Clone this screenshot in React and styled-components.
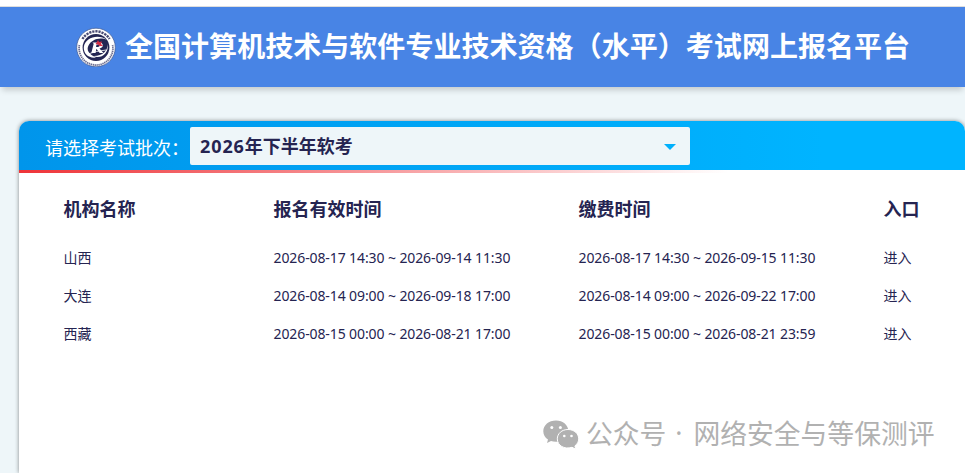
import React from "react";
import styled, { createGlobalStyle } from "styled-components";

const GlobalStyle = createGlobalStyle`
    * {
        box-sizing: border-box;
    }
    body {
        margin: 0;
        overflow: hidden;
        background-color: #eef6f9;
        font-family: "Noto Sans", "Noto Sans CJK SC", sans-serif;
        color: #252451;
    }
`

const Page = styled.div`
    display: flex;
    flex-direction: column;
    height: 473px;
    overflow: hidden;
`

const TopLine = styled.div`
    flex: none;
    height: 7px;
    background-color: white;
    border-bottom: 1px solid #dedede;
`

const Header = styled.header`
    display: flex;
    flex: none;
    align-items: center;
    height: 80px;
    padding-left: 76px;
    background-color: #4884e5;
    box-shadow: 0 5px 6px -2px rgba(0, 0, 0, 0.18);
`

const Title = styled.h1`
    margin: 0 0 0 9px;
    padding-bottom: 4px;
    font-size: 28px;
    line-height: 40px;
    font-weight: bold;
    font-family: "Noto Sans CJK SC", sans-serif;
    letter-spacing: 0.04px;
    white-space: nowrap;
    color: white;
`

const Card = styled.main`
    flex: 1;
    margin: 34px 0 0 19px;
    border-radius: 10px 10px 0 0;
    background-color: white;
    box-shadow: 0 0 4px rgba(0, 0, 0, 0.45);
`

const BatchBar = styled.div`
    display: flex;
    align-items: center;
    height: 49px;
    padding-left: 26px;
    border-radius: 10px 10px 0 0;
    background: linear-gradient(90deg, #0095eb, #00b4ff 85%);
`

const RedLine = styled.div`
    height: 3px;
    background: linear-gradient(90deg, #ee3338, rgba(238, 51, 56, 0) 75%);
`

const BatchLabel = styled.label`
    width: 145px;
    padding-top: 2px;
    font-size: 18px;
    line-height: 26px;
    font-weight: 400;
    font-family: "Noto Sans CJK SC", sans-serif;
    white-space: nowrap;
    color: white;
`

const Select = styled.div`
    display: flex;
    align-items: center;
    justify-content: space-between;
    width: 500px;
    height: 38px;
    padding: 0 14px 0 10px;
    border-radius: 2px;
    background-color: #eef6f9;
    font-size: 18px;
    line-height: 26px;
    font-weight: bold;
`

const Batch = styled.span`
    padding-top: 1px;
`

const Year = styled.span`
    letter-spacing: 0.9px;
`

const Arrow = styled.span`
    margin-top: 2px;
    border: 6px solid transparent;
    border-top-color: #00b0fc;
    border-bottom: 0;
`

const Row = styled.div`
    display: grid;
    grid-template-columns: 210px 305px 305px 1fr;
    align-items: center;
    height: 38px;
    padding-left: 44.5px;
    font-size: 14px;
    line-height: 20px;
    white-space: nowrap;
`

const HeadRow = styled(Row)`
    height: 66px;
    padding-top: 6px;
    font-size: 18px;
    line-height: 26px;
    font-weight: bold;
`

const Time = styled.span`
    letter-spacing: -0.1px;
`

const Watermark = styled.div`
    position: absolute;
    left: 543px;
    top: 413px;
    display: flex;
    align-items: center;
    height: 40px;
    color: #b1b1b1;
    font-size: 26.8px;
    line-height: 40px;
    font-weight: 400;
    font-family: "Noto Sans CJK SC", sans-serif;
    white-space: nowrap;
`

const WatermarkIcon = styled.svg`
    flex: none;
    margin-top: 4px;
`

const Account = styled.span`
    margin-left: 6px;
`

const Dot = styled.span`
    width: 27px;
    padding-right: 2px;
    text-align: center;
    font-family: "Noto Sans", sans-serif;
`

const rows = [
    { name: "山西", signup: "2026-08-17 14:30 ~ 2026-09-14 11:30", pay: "2026-08-17 14:30 ~ 2026-09-15 11:30" },
    { name: "大连", signup: "2026-08-14 09:00 ~ 2026-09-18 17:00", pay: "2026-08-14 09:00 ~ 2026-09-22 17:00" },
    { name: "西藏", signup: "2026-08-15 00:00 ~ 2026-08-21 17:00", pay: "2026-08-15 00:00 ~ 2026-08-21 23:59" }
];

const Logo = () => (
    <svg width="40" height="40" viewBox="0 0 40 40">
        <circle cx="20" cy="20.5" r="19.3" fill="white" stroke="#3e5791" strokeWidth="0.7" />
        {/* lettering around the ring */}
        <path d="M6.5 12A15.7 15.7 0 0 1 33.5 12" fill="none" stroke="#4b4c74" strokeWidth="2.4" strokeDasharray="2.2 0.9" />
        <path d="M3.4 18A16.9 16.9 0 1 0 36.6 18" fill="none" stroke="#6d6e90" strokeWidth="1.8" strokeDasharray="1.4 0.6" />
        <circle cx="20" cy="20.5" r="13.4" fill="#242653" />
        <path d="M31 13C23 6.5 9 10 7.8 20C7.3 27 13 31.5 20 30.5C13 27.5 10 23 12.5 18.5C15.5 12.5 24 9.5 31 13Z" fill="white" />
        <path d="M31.5 17C32 24 26 29.5 17 29C24 32.5 33.5 27 31.5 17Z" fill="white" />
        <path d="M16.5 15.5H23C28 15.5 28 21 23.5 21.5L27.5 26H23.7L20.4 21.7L19.5 26H15.3L17.7 16.8Z" fill="white" />
        <path d="M20.5 17.5H23C24.3 17.5 24 20 22 20H20Z" fill="#242653" />
        <path d="M22 13L23 15L26 14.5L25 17L27 19L23.5 19L22 17.5L19.5 17L21 15Z" fill="#d42e45" />
        <path d="M12 27Q20 24 30 23" fill="none" stroke="white" strokeWidth="0.8" />
    </svg>
);

const WechatIcon = () => (
    <WatermarkIcon width="37" height="30" viewBox="0 0 37 30">
        <path d="M13 0.5C5.8 0.5 0.3 5.1 0.3 11.2C0.3 14.7 2.1 17.7 5 19.6L4 23L8 21Q10.5 22 14 21.8C20.6 21.6 25.4 17 25.4 11.2C25.4 5.1 20 0.5 13 0.5Z" fill="#b1b1b1" />
        <circle cx="8.8" cy="7.6" r="1.5" fill="white" />
        <circle cx="17.4" cy="7.6" r="1.5" fill="white" />
        <path d="M25 9.5C31.1 9.5 35.7 13.6 35.7 18.9C35.7 21.7 34.2 24.2 31.9 25.9L32.8 29.2L29 27.3C21.2 29.7 14.3 25.4 14.3 18.9C14.3 13.6 18.9 9.5 25 9.5Z" fill="#b1b1b1" stroke="white" strokeWidth="1" />
        <circle cx="21.3" cy="16" r="1.3" fill="white" />
        <circle cx="28.5" cy="16" r="1.3" fill="white" />
    </WatermarkIcon>
);

const App = () => {
    return (
        <>
            <GlobalStyle />
            <Page>
                <TopLine />
                <Header>
                    <Logo />
                    <Title>全国计算机技术与软件专业技术资格（水平）考试网上报名平台</Title>
                </Header>
                <Card>
                    <BatchBar>
                        <BatchLabel>请选择考试批次：</BatchLabel>
                        <Select>
                            <Batch><Year>2026</Year>年下半年软考</Batch>
                            <Arrow />
                        </Select>
                    </BatchBar>
                    <RedLine />
                    <HeadRow>
                        <span>机构名称</span>
                        <span>报名有效时间</span>
                        <span>缴费时间</span>
                        <span>入口</span>
                    </HeadRow>
                    {rows.map((row) => (
                        <Row key={row.name}>
                            <span>{row.name}</span>
                            <Time>{row.signup}</Time>
                            <Time>{row.pay}</Time>
                            <span>进入</span>
                        </Row>
                    ))}
                </Card>
            </Page>
            <Watermark>
                <WechatIcon />
                <Account>公众号</Account>
                <Dot>·</Dot>
                <span>网络安全与等保测评</span>
            </Watermark>
        </>
    );
}

export default App;
